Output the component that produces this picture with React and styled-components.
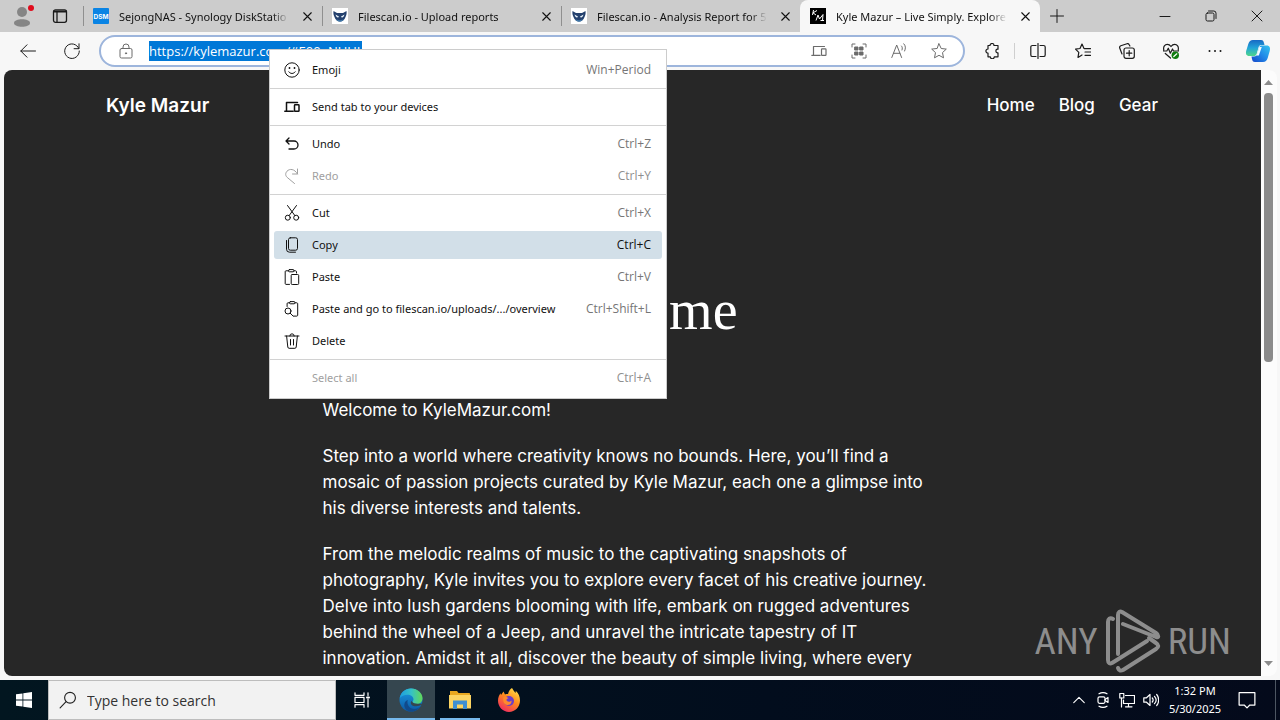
import { useState } from "react";
import styled, { createGlobalStyle, css } from "styled-components";

const GlobalStyle = createGlobalStyle`
  * {
    box-sizing: border-box;
  }
  body {
    margin: 0;
    overflow: hidden;
    font-family: "Noto Sans", "Open Sans", sans-serif;
    font-size: 11px;
    color: #1b1b1b;
  }
  button {
    margin: 0;
    padding: 0;
    border: 0;
    background: none;
    font: inherit;
    color: inherit;
    text-align: left;
  }
`;

const Icon = ({ size = 16, children, sw = 1, ...rest }) => (
  <svg
    width={size}
    height={size}
    viewBox="0 0 16 16"
    fill="none"
    stroke="currentColor"
    strokeWidth={sw}
    strokeLinecap="round"
    strokeLinejoin="round"
    aria-hidden="true"
    {...rest}
  >
    {children}
  </svg>
);

const CloseIcon = ({ size = 16 }) => (
  <Icon size={size} sw="1.2">
    <path d="M4 4l8 8M12 4l-8 8" />
  </Icon>
);

const DevicesIcon = (props) => (
  <Icon {...props}>
    <path d="M13.5 3.5h-11v8M.8 12.3h8.4" />
    <rect x="10.5" y="5.8" width="4.5" height="6.5" rx=".6" />
  </Icon>
);

const Owl = () => (
  <svg width="16" height="16" viewBox="0 0 16 16" aria-hidden="true">
    <rect width="16" height="16" fill="#fff" />
    <path d="M1.5 3L5 5h6l3.5-2c.4 3-.3 4.500-1 6-.8 2.400-2.600 4.500-5.500 4.500s-4.700-2.100-5.500-4.500c-.7-1.500-1.400-3-1-6z" fill="#24406d" />
    <path d="M3.500 6.500l3.700 2.200c-1 1.300-3 1-3.700-2.200zM12.500 6.500L8.800 8.700c1 1.300 3 1 3.700-2.200z" fill="#eaf4fb" />
    <path d="M4 11c2 1.500 6 1.500 8 0-1 2-2.500 2.700-4 2.700S5 13 4 11z" fill="#3f78aa" />
  </svg>
);

const Dsm = () => (
  <svg width="16" height="16" viewBox="0 0 16 16" aria-hidden="true">
    <rect width="16" height="16" rx="1" fill="#0a84e4" />
    <text x="8" y="10.5" fill="#fff" fontSize="6.5" fontWeight="700" fontFamily="Inter, sans-serif" textAnchor="middle">
      DSM
    </text>
  </svg>
);

const KmLogo = () => (
  <svg width="16" height="16" viewBox="0 0 16 16" aria-hidden="true">
    <rect width="16" height="16" fill="#000" />
    <g fill="none" stroke="#fff" strokeWidth="1">
      <path d="M3.500 2L2.500 7M7 2.500L3 4.800l3 2.200" />
      <path d="M6 12.500L8 7l1.500 4L13 6.500l-.5 6M10.500 12.500h3.500" />
    </g>
  </svg>
);

const TABS = [
  { title: "SejongNAS - Synology DiskStatio", icon: <Dsm /> },
  { title: "Filescan.io - Upload reports", icon: <Owl /> },
  { title: "Filescan.io - Analysis Report for 5", icon: <Owl /> },
  { title: "Kyle Mazur – Live Simply. Explore", icon: <KmLogo />, active: true },
];

const MENU = [
  [
    {
      label: "Emoji",
      keys: "Win+Period",
      icon: (
        <Icon>
          <circle cx="8" cy="8" r="7.200" />
          <path d="M4.800 9.800c1.500 2.300 4.900 2.300 6.400 0" />
          <path d="M5.500 6h.01M10.500 6h.01" strokeWidth="1.800" />
        </Icon>
      ),
    },
  ],
  [{ label: "Send tab to your devices", icon: <DevicesIcon sw="1.500" /> }],
  [
    {
      label: "Undo",
      keys: "Ctrl+Z",
      icon: (
        <Icon sw="1.300">
          <path d="M5 2L2 5l3 3M2.200 5H10a4 4 0 010 8H5" />
        </Icon>
      ),
    },
    {
      label: "Redo",
      keys: "Ctrl+Y",
      disabled: true,
      icon: (
        <Icon>
          <path d="M13.500 1v5h-5M13.500 6C10.500.5 5.500.500 3 3.200c-2 2.300-1.500 4.600.2 6.200L10.500 15.500" />
        </Icon>
      ),
    },
  ],
  [
    {
      label: "Cut",
      keys: "Ctrl+X",
      icon: (
        <Icon>
          <circle cx="3.800" cy="12.700" r="2.500" />
          <circle cx="12.200" cy="12.700" r="2.500" />
          <path d="M3.500.500l7.300 10M12.500.500l-7.300 10" />
        </Icon>
      ),
    },
    {
      label: "Copy",
      keys: "Ctrl+C",
      hover: true,
      icon: (
        <Icon>
          <rect x="4.500" y=".800" width="9" height="12.400" rx="1.800" />
          <path d="M2.500 3.500v8.700a3 3 0 003 3h6" />
        </Icon>
      ),
    },
    {
      label: "Paste",
      keys: "Ctrl+V",
      icon: (
        <Icon>
          <path d="M4.500 1.800H2a.8.800 0 00-.8.800v12c0 .400.400.800.800.800h3.500M10 1.800h1.600c.5 0 .9.400.9.900V4" />
          <rect x="4.500" y=".600" width="5.500" height="2.200" rx="1" />
          <rect x="7.200" y="5.500" width="7.500" height="10" rx="1" />
        </Icon>
      ),
    },
    {
      label: "Paste and go to filescan.io/uploads/.../overview",
      keys: "Ctrl+Shift+L",
      icon: (
        <Icon>
          <path d="M5.500 1.800H4a.9.900 0 00-.9.900V5.500M11 1.800h1.800c.5 0 .9.400.9.900v11.500c0 .500-.4.900-.9.900H9.500" />
          <rect x="5.500" y=".600" width="5.500" height="2.200" rx="1" />
          <circle cx="4" cy="10" r="3" />
          <path d="M6.200 12.200L9 15" />
        </Icon>
      ),
    },
    {
      label: "Delete",
      icon: (
        <Icon>
          <path d="M1 3h14M5.800 3a2.200 2.200 0 014.400 0M2.600 3l1.200 11c.1.800.5 1.300 1.300 1.300h5.800c.8 0 1.200-.500 1.300-1.300l1.200-11M6.500 6.500v5.500M9.500 6.500v5.500" />
        </Icon>
      ),
    },
  ],
  [{ label: "Select all", keys: "Ctrl+A", disabled: true, icon: <Icon /> }],
];

function TabStrip() {
  return (
    <Strip>
      <Lead>
        <ToolButton $w={28} aria-label="Profile">
          <svg width="28" height="28" viewBox="0 0 28 28" aria-hidden="true">
            <circle cx="14" cy="10" r="5" fill="#858585" />
            <path d="M6 21c0-5 16-5 16 0 0 5-16 5-16 0z" fill="#858585" />
            <circle cx="23" cy="6" r="3" fill="#e00b1c" />
          </svg>
        </ToolButton>
        <ToolButton $w={24} aria-label="Tab actions">
          <Icon sw="1.300">
            <rect x="1.500" y="1.800" width="13" height="12.500" rx="2" />
            <path d="M2 3.500h12" strokeWidth="2" />
            <path d="M5 4v10" />
          </Icon>
        </ToolButton>
      </Lead>
      {TABS.map((tab, index) => (
        <Tab key={index} $active={tab.active}>
          {tab.icon}
          <TabTitle>{tab.title}</TabTitle>
          <ToolButton $w={16} aria-label="Close tab">
            <CloseIcon size={15} />
          </ToolButton>
        </Tab>
      ))}
      <ToolButton $w={34} aria-label="New tab">
        <Icon>
          <path d="M8 1.500v13M1.500 8h13" />
        </Icon>
      </ToolButton>
      <WindowButtons>
        <ToolButton $w={46} aria-label="Minimize">
          <Icon>
            <path d="M3 8.500h10" />
          </Icon>
        </ToolButton>
        <ToolButton $w={46} aria-label="Restore">
          <Icon>
            <rect x="3" y="5" width="8" height="8" rx="1.500" />
            <path d="M5.500 3h5.300A2.200 2.200 0 0113 5.200v5.300" />
          </Icon>
        </ToolButton>
        <ToolButton $w={46} aria-label="Close">
          <Icon>
            <path d="M3 3l10 10M13 3L3 13" />
          </Icon>
        </ToolButton>
      </WindowButtons>
    </Strip>
  );
}

function Toolbar() {
  const [url, setUrl] = useState("https://kylemazur.com/#E00=NUUI");
  return (
    <Bar>
      <ToolButton $w={44} aria-label="Back">
        <Icon>
          <path d="M15.500 8H.8M7 1.800L.8 8 7 14.200" />
        </Icon>
      </ToolButton>
      <ToolButton $w={44} aria-label="Refresh">
        <Icon>
          <path d="M14.800 5.500A7.300 7.300 0 1015.300 8M15 .8v4.900h-4.900" />
        </Icon>
      </ToolButton>
      <Omnibox>
        <Muted $w={44}>
          <Icon>
            <rect x="2" y="5.500" width="12" height="9.500" rx="1.500" />
            <path d="M5 5.500V4a3 3 0 016 0v1.500" />
            <circle cx="8" cy="10.300" r=".6" fill="currentColor" />
          </Icon>
        </Muted>
        <Address
          aria-label="Address and search bar"
          value={url}
          onChange={(e) => setUrl(e.target.value)}
        />
        <OmniActions>
          <Muted $w={40}>
            <DevicesIcon sw="1.200" />
          </Muted>
          <Muted $w={40}>
            <Icon>
              <path d="M1 4V1h3M12 1h3v3M15 12v3h-3M4 15H1v-3" />
              <path d="M4 4h3v3H4zM9 4h3v3H9zM4 9h3v3H4zM9 9h3v3H9z" fill="currentColor" />
            </Icon>
          </Muted>
          <Muted $w={40}>
            <Icon>
              <path d="M.8 14.500L5.700 2l4.900 12.500M2.500 10.300h6.400M10.500 3c1 1 1 2.500.5 4M12.800.800c2 2 2 4.500.8 7.200" />
            </Icon>
          </Muted>
          <Muted $w={40}>
            <Icon>
              <path d="M8 .800l2.200 4.700 5.100.6-3.800 3.500 1 5.200L8 12.300l-4.500 2.500 1-5.200L.7 6.100l5.100-.6z" />
            </Icon>
          </Muted>
        </OmniActions>
      </Omnibox>
      <ToolButton $w={42} aria-label="Extensions">
        <Icon sw="1.200">
          <path d="M5 2.500a2 2 0 014 0h4v3.700h-.7a1.900 1.900 0 000 3.700h.7v3.900H9.300a2 2 0 01-4 0H3V10.200a2.100 2.100 0 010-4.200V2.500z" />
        </Icon>
      </ToolButton>
      <Divider />
      <ToolButton $w={46} aria-label="Split screen">
        <Icon sw="1.200">
          <path d="M6 2.500H2.500c-1 0-1.700.6-1.700 1.600v7.800c0 1 .7 1.600 1.700 1.600H6M10 2.500h3.500c1 0 1.700.6 1.700 1.600v7.800c0 1-.7 1.600-1.700 1.600H10M8 .5v15" />
        </Icon>
      </ToolButton>
      <ToolButton $w={44} aria-label="Favorites">
        <Icon sw="1.200">
          <path d="M9 5.500L7 1 5 5.500l-4.500.6 3.300 3.300-.8 5L7 12M9.500 5.700h6M10 9h5.500M10 12.300h5.500" />
        </Icon>
      </ToolButton>
      <ToolButton $w={44} aria-label="Collections">
        <Icon sw="1.200">
          <rect x="5" y="5" width="10.300" height="10.300" rx="2" />
          <path d="M10.200 7.500v5.300M7.500 10.200h5.300M3 11L.8 5.200c-.4-1 0-2 1-2.400L8 .700c1-.3 1.800.100 2.200 1l.7 1.300" />
        </Icon>
      </ToolButton>
      <ToolButton $w={44} aria-label="Browser essentials">
        <Icon sw="1.200">
          <path d="M.8 7C0 3.500 2 1.300 4.300 1.300c1.700 0 2.800.9 3.700 2.200.9-1.300 2-2.200 3.700-2.200C14 1.300 16 3.500 15.200 7M.5 8h3.300l1.500-2.800 2 5L9.500 6l1 2h5M2.300 10.500L7.500 15" />
          <circle cx="12.300" cy="12.300" r="3.700" fill="#107c10" stroke="none" />
          <path d="M10.800 13.500l3-2.700" stroke="#fff" />
        </Icon>
      </ToolButton>
      <ToolButton $w={44} aria-label="Settings and more">
        <Icon>
          <path d="M2.500 8h.01M8 8h.01M13.500 8h.01" strokeWidth="2" />
        </Icon>
      </ToolButton>
      <ToolButton $w={42} aria-label="Copilot">
        <svg width="26" height="26" viewBox="0 0 26 26" aria-hidden="true">
          <defs>
            <linearGradient id="cpA" x1="0" y1="0" x2="0" y2="1">
              <stop offset="0" stopColor="#1769c4" />
              <stop offset=".5" stopColor="#22a5d8" />
              <stop offset="1" stopColor="#4fd68a" />
            </linearGradient>
            <linearGradient id="cpB" x1="1" y1="0" x2="0" y2="1">
              <stop offset="0" stopColor="#33c5ef" />
              <stop offset=".5" stopColor="#2189e8" />
              <stop offset="1" stopColor="#1446c8" />
            </linearGradient>
          </defs>
          <path d="M8 2h8c2 0 2.500 1 3 3l.5 2h-3c-2 0-2.700 1-3.200 3l-1.500 5.500c-.6 2-1.500 2.500-3.300 2.500H4.500C1 18 .500 15.500 1.300 12.500l2-6.500C4.200 3.200 5.500 2 8 2z" fill="url(#cpA)" />
          <path d="M18 24h-8c-2 0-2.600-1-3-3l-.5-2.500H9c2 0 3-1 3.500-3L14 10c.6-2 1.500-2.500 3.300-2.500h4.200c3.500 0 4 2.500 3.200 5.500l-2 7c-.9 2.800-2.200 4-4.700 4z" fill="url(#cpB)" />
          <path d="M14.300 9l2.500 0-3 8.500h-2.300z" fill="#f2fbff" />
        </svg>
      </ToolButton>
    </Bar>
  );
}

function ContextMenu() {
  return (
    <MenuBox role="menu">
      {MENU.map((group, index) => (
        <MenuGroup key={index}>
          {group.map((item) => (
            <MenuItem
              key={item.label}
              role="menuitem"
              disabled={item.disabled}
              $hover={item.hover}
            >
              {item.icon}
              <span>{item.label}</span>
              <Keys>{item.keys}</Keys>
            </MenuItem>
          ))}
        </MenuGroup>
      ))}
    </MenuBox>
  );
}

function Site() {
  return (
    <Page>
      <SiteBody>
        <SiteHeader>
          <Brand href="#home">Kyle Mazur</Brand>
          <SiteNav>
            <a href="#home">Home</a>
            <a href="#blog">Blog</a>
            <a href="#gear">Gear</a>
          </SiteNav>
        </SiteHeader>
        <Title>Welcome</Title>
        <Article>
          <p>Welcome to KyleMazur.com!</p>
          <p>
            Step into a world where creativity knows no bounds. Here, you’ll
            find a mosaic of passion projects curated by Kyle Mazur, each one a
            glimpse into his diverse interests and talents.
          </p>
          <p>
            From the melodic realms of music to the captivating snapshots of
            photography, Kyle invites you to explore every facet of his creative
            journey. Delve into lush gardens blooming with life, embark on
            rugged adventures behind the wheel of a Jeep, and unravel the
            intricate tapestry of IT innovation. Amidst it all, discover the
            beauty of simple living, where every
          </p>
        </Article>
      </SiteBody>
      <Scrollbar>
        <svg width="9" height="5" viewBox="0 0 9 5" aria-hidden="true">
          <path d="M4.500 0L9 5H0z" fill="#8b8b8b" />
        </svg>
        <Track>
          <Thumb />
        </Track>
        <svg width="9" height="5" viewBox="0 0 9 5" aria-hidden="true">
          <path d="M0 0h9L4.500 5z" fill="#8b8b8b" />
        </svg>
      </Scrollbar>
      <Watermark>
        <span>ANY</span>
        <svg width="56" height="64" viewBox="0 0 56 64" aria-hidden="true">
          <g fill="none" stroke="#8d8d8d" strokeWidth="4" strokeLinejoin="round" strokeLinecap="round">
            <path d="M8 10c-3-2-5 0-5 3v38c0 3 2 4 4 3l35-22" />
            <path d="M13 45V6c0-3 2-4 4-3l34 21c3 2 3 5 0 4L18 15" />
            <path d="M13 59c1 3 3 3 5 2l33-21c3-2 3-4 0-6l-7-5" />
          </g>
        </svg>
        <span>RUN</span>
      </Watermark>
    </Page>
  );
}

function Taskbar() {
  return (
    <TaskRow>
      <TaskButton $w={48} aria-label="Start">
        <svg width="16" height="16" viewBox="0 0 16 16" fill="#fff" aria-hidden="true">
          <path d="M0 2.300L6.500 1.400v6.200H0zM7.300 1.300L16 0v7.600H7.300zM0 8.400h6.500v6.200L0 13.700zM7.300 8.400H16V16l-8.700-1.300z" />
        </svg>
      </TaskButton>
      <SearchBox>
        <Icon size={18}>
          <circle cx="9.800" cy="6" r="4.800" />
          <path d="M6.300 9.500L1 15" />
        </Icon>
        <input aria-label="Search" placeholder="Type here to search" />
      </SearchBox>
      <TaskButton $w={51} aria-label="Task view">
        <Icon sw="1.200">
          <path d="M1 .800v2.500h9V.800M1 15.200v-2.500h9v2.500M14 .800v2.700M14 7v8" />
          <rect x="1" y="5.300" width="9" height="5.200" />
          <path d="M13 5.500h2" strokeWidth="2" />
        </Icon>
      </TaskButton>
      <TaskButton $w={48} $active aria-label="Edge">
        <svg width="24" height="24" viewBox="0 0 24 24" aria-hidden="true">
          <defs>
            <linearGradient id="edA" x1="0" y1="0" x2="1" y2="0">
              <stop offset="0" stopColor="#1c9de0" />
              <stop offset=".5" stopColor="#35c1c8" />
              <stop offset="1" stopColor="#62d957" />
            </linearGradient>
            <linearGradient id="edB" x1="0" y1="0" x2="0" y2="1">
              <stop offset="0" stopColor="#1b9be3" />
              <stop offset="1" stopColor="#0c59a4" />
            </linearGradient>
          </defs>
          <circle cx="12" cy="12" r="11.500" fill="url(#edB)" />
          <path d="M.8 10C2 4 6.500.500 12 .500c6.500 0 11.500 4.800 11.500 9.700 0 3.800-2.800 6-6 6-2.500 0-4-1-4-2 0-.7 1-1.200 1-2.900 0-2.500-2.600-4.600-6-4.600C5 6.700 2.300 8 .8 10z" fill="url(#edA)" />
          <path d="M8.800 12c-1.500 4 1.500 9 6.500 9 2.700 0 4.800-1.200 6.200-2.800-1.700 3-5.500 5.300-9.500 5.300-5 0-7.500-4.500-6.500-8 .5-1.700 1.700-3 3.300-3.500z" fill="#114a8b" />
          <path d="M24 16c-2 1.700-8.200 3.400-11 1.200-1.500-1.200-1.700-3-.5-4.500.3 1 2.300 3.800 11.500 3z" fill="#35464f" />
        </svg>
      </TaskButton>
      <TaskButton $w={50} $open aria-label="File Explorer">
        <svg width="22" height="20" viewBox="0 0 22 20" aria-hidden="true">
          <path d="M1 1h7l1.500 2H20c.6 0 1 .4 1 1v14H1z" fill="#e9a820" />
          <path d="M0 5h22v13.500H0z" fill="#fcd462" />
          <path d="M4 10.500h14V19h-4v-4.500H8V19H4z" fill="#3f8fd2" />
        </svg>
      </TaskButton>
      <TaskButton $w={48} aria-label="Firefox">
        <svg width="22" height="24" viewBox="0 0 22 24" aria-hidden="true">
          <defs>
            <linearGradient id="fxA" x1=".8" y1="0" x2=".2" y2="1">
              <stop offset="0" stopColor="#ffe14a" />
              <stop offset=".45" stopColor="#ff8a1c" />
              <stop offset="1" stopColor="#ef2466" />
            </linearGradient>
          </defs>
          <path d="M14 0c1.500 2 2 3.500 3.500 5 .3-.8.3-1.500.2-2.200C20.500 5 22 9 22 12.500 22 19 17 24 11 24S0 19 0 12.800C0 9.500 1.200 7 2.500 5.200L3 7l2.500-3.500L7 6.500c1-.5 2-.6 3-.5.500-2.500 2-5 4-6z" fill="url(#fxA)" />
          <circle cx="11" cy="13" r="5" fill="#6a3dc8" />
          <path d="M5.500 9c2-.5 4 0 5 1.500-2 0-2.500 1.500-1.500 2.500 1.500 1.500 4 .5 4.500-.5.500 3-2 5-4.500 4.500C6 16.400 4.500 13 5.500 9z" fill="#ff8a2c" />
        </svg>
      </TaskButton>
      <Tray>
        <TaskButton $w={24} aria-label="Show hidden icons">
          <Icon size={14} sw="1.300">
            <path d="M2 11l6-6 6 6" />
          </Icon>
        </TaskButton>
        <TaskButton $w={24} aria-label="Meet now">
          <Icon sw="1.200">
            <rect x="3" y="4.800" width="7" height="6.500" rx="1.500" />
            <path d="M10 7.500l3-2v5l-3-2M4 1.800c2.500-1.500 5.500-1.500 8 0M4 14.200c2.500 1.500 5.500 1.500 8 0" />
          </Icon>
        </TaskButton>
        <TaskButton $w={24} aria-label="Network">
          <Icon sw="1.200">
            <path d="M6.500 3.500h9v8h-11V8M9.500 11.500v3M6.500 14.800h6.500M2.500 6v9" />
            <rect x=".8" y="1.500" width="4" height="4.500" />
          </Icon>
        </TaskButton>
        <TaskButton $w={24} aria-label="Volume">
          <Icon sw="1.200">
            <path d="M.8 5.800h2.700L7 2.500v11l-3.500-3.300H.800zM9.300 6c1 1.200 1 2.800 0 4M11.500 4.300c2 2.200 2 5.200 0 7.400M13.700 2.500c2.600 3 2.600 8 0 11" />
          </Icon>
        </TaskButton>
        <Clock>
          <span>1:32 PM</span>
          <span>5/30/2025</span>
        </Clock>
        <TaskButton $w={40} aria-label="Notifications">
          <Icon size={18} sw="1.100">
            <path d="M1 1.500h14v11h-4.500L8 15l-2.500-2.500H1z" />
          </Icon>
        </TaskButton>
        <ShowDesktop aria-label="Show desktop" />
      </Tray>
    </TaskRow>
  );
}

function App() {
  return (
    <Desktop>
      <GlobalStyle />
      <TabStrip />
      <Toolbar />
      <Site />
      <Taskbar />
      <ContextMenu />
    </Desktop>
  );
}

const Desktop = styled.div`
  position: relative;
  display: flex;
  flex-direction: column;
  height: 100vh;
  background: #f7f7f7;
`;

const ToolButton = styled.button`
  display: flex;
  flex: none;
  align-items: center;
  justify-content: center;
  width: ${(p) => p.$w}px;
  height: 32px;
`;

const Strip = styled.div`
  display: flex;
  flex: none;
  height: 32px;
  background: #cccccc;
`;

const Lead = styled.div`
  display: flex;
  flex: none;
  gap: 12px;
  width: 83px;
  padding-left: 8px;
`;

const Tab = styled.div`
  display: flex;
  flex: 0 1 239px;
  align-items: center;
  gap: 10px;
  min-width: 0;
  padding: 0 7px 0 10px;
  background: linear-gradient(#8f8f8f, #8f8f8f) left center / 1px 20px no-repeat;
  color: #111111;
  ${(p) =>
    p.$active &&
    css`
      flex-basis: 240px;
      border-radius: 8px 8px 0 0;
      background: #f7f7f7;
    `}
  > svg {
    flex: none;
  }
`;

const TabTitle = styled.span`
  flex: 1;
  overflow: hidden;
  white-space: nowrap;
  mask-image: linear-gradient(90deg, #000 90%, transparent);
`;

const WindowButtons = styled.div`
  display: flex;
  margin-left: auto;
`;

const Bar = styled.div`
  display: flex;
  flex: none;
  align-items: center;
  height: 38px;
  padding: 0 1px 0 6px;
`;

const Omnibox = styled.div`
  display: flex;
  flex: 1;
  align-items: center;
  height: 32px;
  margin: 0 7px 0 5px;
  padding: 0 4px 0 3px;
  border: 2px solid #9db5dc;
  border-radius: 16px;
  background: #ffffff;
`;

const Muted = styled(ToolButton)`
  color: #6b6b6b;
  height: 28px;
`;

const Address = styled.input`
  width: 213px;
  height: 20px;
  margin-left: 1px;
  padding: 0;
  border: 0;
  outline: 0;
  background: #0078d7;
  color: #ffffff;
  font: 13px "Open Sans", "Noto Sans", sans-serif;
`;

const OmniActions = styled.div`
  display: flex;
  margin-left: auto;
`;

const Divider = styled.span`
  width: 1px;
  height: 16px;
  background: #cfcfcf;
`;

const Page = styled.main`
  position: relative;
  display: flex;
  flex: 1;
  min-height: 0;
  margin: 0 3px 4px 4px;
  border-radius: 8px;
  overflow: hidden;
  background: #fcfcfc;
`;

const SiteBody = styled.div`
  flex: 1;
  overflow: hidden;
  background: #272727;
  color: #ffffff;
  font-family: Inter, sans-serif;
  font-size: 17px;
  a {
    color: inherit;
    text-decoration: none;
  }
`;

const SiteHeader = styled.header`
  display: flex;
  align-items: center;
  justify-content: space-between;
  height: 70px;
  padding: 0 103px 0 102px;
`;

const Brand = styled.a`
  font-size: 19px;
  font-weight: 600;
`;

const SiteNav = styled.nav`
  display: flex;
  gap: 24px;
  font-weight: 500;
`;

const Title = styled.h1`
  margin: 136px 0 53px;
  font: 400 56px/68px "Liberation Serif", serif;
  text-align: center;
`;

const Article = styled.article`
  max-width: 620px;
  margin: 0 auto;
  line-height: 26px;
  p {
    margin: 0 0 20px;
  }
`;

const Scrollbar = styled.div`
  display: flex;
  flex: none;
  flex-direction: column;
  align-items: center;
  gap: 8px;
  width: 16px;
  padding: 10px 1px 10px 0;
`;

const Track = styled.div`
  flex: 1;
  width: 9px;
`;

const Thumb = styled.div`
  height: 48%;
  border-radius: 4px;
  background: #8b8b8b;
`;

const Watermark = styled.div`
  position: absolute;
  right: 46px;
  bottom: 3px;
  display: flex;
  align-items: center;
  gap: 7px;
  color: #8d8d8d;
  font: 400 37px "Roboto Condensed", "Liberation Sans Narrow", sans-serif;
`;

const MenuBox = styled.div`
  position: absolute;
  top: 49px;
  left: 269px;
  width: 398px;
  padding: 4px 0;
  border: 1px solid #cccccc;
  background: #ffffff;
`;

const MenuGroup = styled.div`
  display: flex;
  flex-direction: column;
  & + & {
    margin-top: 2px;
    padding-top: 2px;
    border-top: 1px solid #d2d2d2;
  }
`;

const Keys = styled.kbd`
  margin-left: auto;
  color: #767676;
  font: 12px "Open Sans", "Noto Sans", sans-serif;
`;

const MenuItem = styled.button`
  display: flex;
  align-items: center;
  gap: 12px;
  height: 28px;
  margin: 2px 4px;
  padding: 0 11px 1px 10px;
  border-radius: 3px;
  color: ${(p) => (p.disabled ? "#a0a0a0" : "#111111")};
  background: ${(p) => (p.$hover ? "#d2dfe8" : "transparent")};
  ${Keys} {
    color: ${(p) => (p.$hover ? "#111111" : p.disabled && "#8f8f8f")};
  }
`;

const TaskRow = styled.footer`
  display: flex;
  flex: none;
  height: 40px;
  background: linear-gradient(90deg, #021620, #020d1d 60%, #040a1b);
  color: #ffffff;
`;

const TaskButton = styled.button`
  display: flex;
  flex: none;
  align-items: center;
  justify-content: center;
  width: ${(p) => p.$w}px;
  height: 40px;
  ${(p) =>
    p.$active &&
    css`
      background: #35464f;
      box-shadow: inset 0 -2px #76b9ed;
    `}
  ${(p) =>
    p.$open &&
    css`
      background: linear-gradient(#76b9ed, #76b9ed) center bottom / 40px 2px no-repeat;
    `}
`;

const SearchBox = styled.label`
  display: flex;
  flex: 0 1 288px;
  align-items: center;
  gap: 10px;
  padding: 0 10px;
  border: 1px solid #bdbdbd;
  background: #f2f2f2;
  color: #222222;
  input {
    flex: 1;
    min-width: 0;
    padding: 0;
    border: 0;
    outline: 0;
    background: none;
    font: 14px "Open Sans", "Noto Sans", sans-serif;
  }
  input::placeholder {
    color: #333333;
    opacity: 1;
  }
`;

const Tray = styled.div`
  display: flex;
  margin-left: auto;
`;

const Clock = styled.time`
  display: flex;
  flex-direction: column;
  align-items: center;
  justify-content: center;
  width: 64px;
  line-height: 18px;
`;

const ShowDesktop = styled.button`
  width: 5px;
  margin-left: 8px;
  border-left: 1px solid #4d5662;
`;

export default App;
